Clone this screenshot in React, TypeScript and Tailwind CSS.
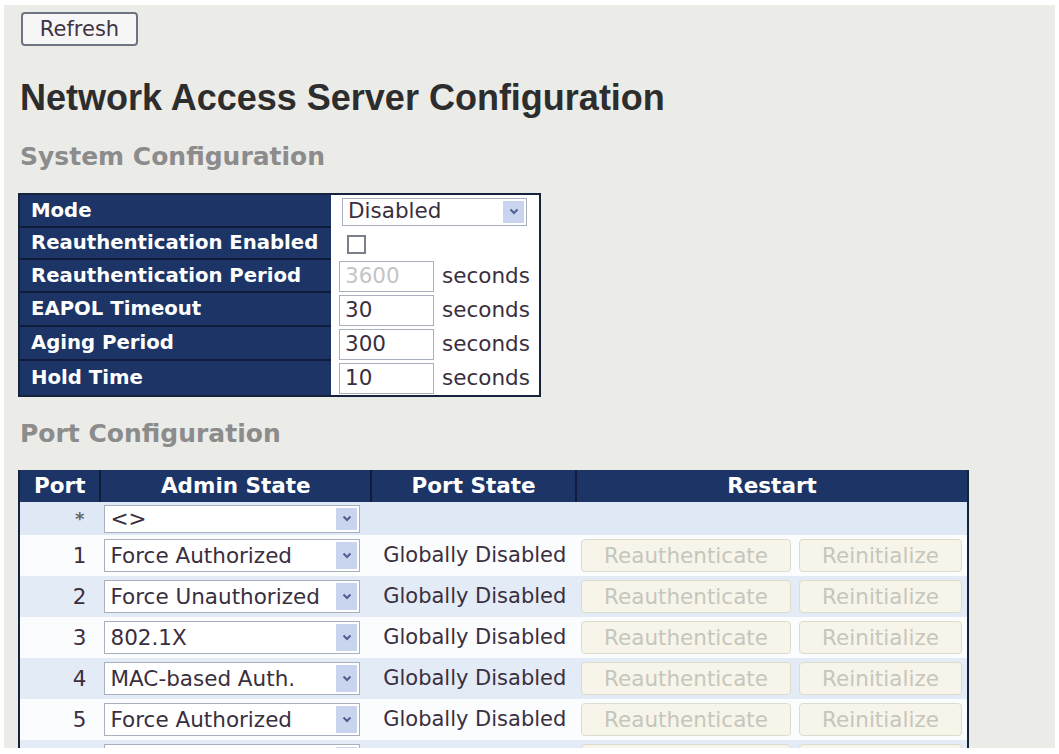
import React from "react";

const SYS_ROWS = [
  { label: "Mode", kind: "select", h: "h-[33px]" },
  { label: "Reauthentication Enabled", kind: "check", h: "h-[32px]" },
  { label: "Reauthentication Period", kind: "input", value: "3600", disabled: true, h: "h-[33px]" },
  { label: "EAPOL Timeout", kind: "input", value: "30", h: "h-[34px]" },
  { label: "Aging Period", kind: "input", value: "300", h: "h-[34px]" },
  { label: "Hold Time", kind: "input", value: "10", h: "h-[34px]" },
];

const PORTS = [
  { port: "1", admin: "Force Authorized" },
  { port: "2", admin: "Force Unauthorized" },
  { port: "3", admin: "802.1X" },
  { port: "4", admin: "MAC-based Auth." },
  { port: "5", admin: "Force Authorized" },
  { port: "6", admin: "Force Authorized" },
];

function Chevron() {
  return (
    <svg width="10" height="7" viewBox="0 0 10 7" fill="none">
      <path d="M1.5 1.5 L5 5 L8.5 1.5" stroke="#4d5f94" strokeWidth="2" />
    </svg>
  );
}

function FakeSelect({ text, className }: { text: string; className: string }) {
  return (
    <div className={`flex items-stretch border border-[#a9b0bd] bg-white ${className}`}>
      <span className="flex-1 pl-[5px] flex items-center text-[21.5px] text-[#3a2f3e] whitespace-nowrap overflow-hidden">
        {text}
      </span>
      <span className="w-[21px] my-[2px] mr-[2px] bg-[#c9d5ee] flex items-center justify-center">
        <Chevron />
      </span>
    </div>
  );
}

function DisabledButton({ text, className }: { text: string; className: string }) {
  return (
    <div
      className={`flex items-center justify-center rounded-[4px] border border-[#dcdccd] bg-[#f7f5ea] text-[21.5px] text-[#c6c6bc] ${className}`}
    >
      {text}
    </div>
  );
}

export default function App() {
  return (
    <div className="w-[1059px] h-[754px] bg-white pt-[5px] pl-[4px] pr-[4px] pb-[6px] font-['DejaVu_Sans',sans-serif]">
      <div className="h-full bg-[#ebebe8] overflow-hidden pl-[14px]">
        <button className="mt-[7px] ml-[3px] h-[34px] w-[117px] rounded-[4px] border-2 border-[#6d7482] bg-[#f6f6f6] text-[21px] leading-none text-[#3f3344]">
          Refresh
        </button>

        <h1 className="mt-[32px] ml-[2px] font-['Liberation_Sans',Arial,sans-serif] font-bold text-[36px] leading-[40px] text-[#2d2d2d]">
          Network Access Server Configuration
        </h1>

        <h2 className="mt-[24px] ml-[2px] font-bold text-[25px] leading-[30px] text-[#8c8c8c]">
          System Configuration
        </h2>

        <table className="mt-[21px] border-2 border-[#16233f] border-separate border-spacing-0 w-[523px]">
          <tbody>
            {SYS_ROWS.map((r, i) => (
              <tr key={r.label} className={r.h}>
                <td
                  className={`w-[311px] bg-[#1c3566] pl-[11px] text-white font-bold text-[19.7px] leading-none whitespace-nowrap ${
                    i < SYS_ROWS.length - 1 ? "border-b-2 border-[#0f1d3b]" : ""
                  }`}
                >
                  {r.label}
                </td>
                <td className="bg-white pl-[8px] pr-[8px]">
                  {r.kind === "select" && <FakeSelect text="Disabled" className="h-[28px] w-[185px] ml-[3px]" />}
                  {r.kind === "check" && (
                    <div className="ml-[8px] w-[19px] h-[19px] border-2 border-[#7b7f88] bg-white" />
                  )}
                  {r.kind === "input" && (
                    <div className="flex items-center gap-[8px]">
                      <div
                        className={`h-[31px] w-[95px] border border-[#a9b0bd] bg-white pl-[5px] flex items-center text-[21.5px] ${
                          r.disabled ? "text-[#c4c4c4]" : "text-[#3a2f3e]"
                        }`}
                      >
                        {r.value}
                      </div>
                      <span className="text-[21.5px] text-[#3a2f3e]">seconds</span>
                    </div>
                  )}
                </td>
              </tr>
            ))}
          </tbody>
        </table>

        <h2 className="mt-[22px] ml-[2px] font-bold text-[25px] leading-[30px] text-[#8c8c8c]">
          Port Configuration
        </h2>

        <table className="mt-[21px] border-2 border-t-0 border-[#16233f] border-separate border-spacing-0 w-[951px]">
          <thead>
            <tr className="h-[30px] bg-[#1c3566] text-white font-bold text-[21.5px]">
              <th className="w-[82px] border-r-2 border-[#0f1d3b] font-bold">Port</th>
              <th className="w-[271px] border-r-2 border-[#0f1d3b] font-bold">Admin State</th>
              <th className="w-[205px] border-r-2 border-[#0f1d3b] font-bold">Port State</th>
              <th colSpan={2} className="font-bold">Restart</th>
            </tr>
          </thead>
          <tbody>
            <tr className="h-[33px] bg-[#dfe9f6]">
              <td className="text-right pr-[17px] text-[18px] text-[#666] font-bold">*</td>
              <td className="pl-[3px] pr-[12px]">
                <FakeSelect text="<>" className="h-[28px]" />
              </td>
              <td></td>
              <td></td>
              <td></td>
            </tr>
            {PORTS.map((p, i) => (
              <tr key={p.port} className={`h-[41px] ${i % 2 === 0 ? "bg-[#fafcfe]" : "bg-[#e3ebf6]"}`}>
                <td className="text-right pr-[15px] text-[21.5px] text-[#3a2f3e]">{p.port}</td>
                <td className="pl-[3px] pr-[12px]">
                  <FakeSelect text={p.admin} className="h-[33px]" />
                </td>
                <td className="text-[21px] text-[#3a2f3e] whitespace-nowrap pl-[11px]">Globally Disabled</td>
                <td className="pl-[4px] pr-[4px]">
                  <DisabledButton text="Reauthenticate" className="h-[33px] w-[210px]" />
                </td>
                <td className="pl-[4px] pr-[5px]">
                  <DisabledButton text="Reinitialize" className="h-[33px] w-[163px]" />
                </td>
              </tr>
            ))}
          </tbody>
        </table>
      </div>
    </div>
  );
}
